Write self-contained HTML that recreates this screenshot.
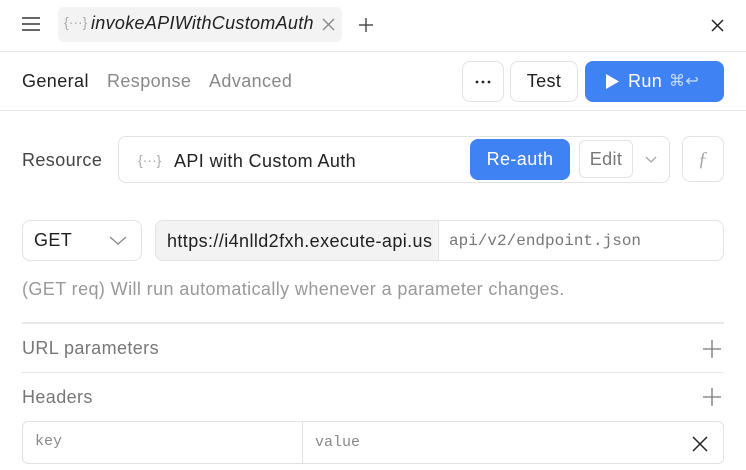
<!DOCTYPE html>
<html><head><style>
*{box-sizing:border-box;margin:0;padding:0}
body{width:746px;height:470px;overflow:hidden;background:#fff;font-family:"Liberation Sans",sans-serif;color:#1f1f1f;position:relative;letter-spacing:0.4px}
.a{position:absolute}
.btn{position:absolute;border:1px solid #e3e3e3;border-radius:8px;background:#fff;display:flex;align-items:center;justify-content:center}
.hr{position:absolute;left:0;right:0;height:1px;background:#e6e6e6}
.mono{font-family:"Liberation Mono",monospace;letter-spacing:0}
</style></head><body>
<svg class="a" style="left:21px;top:16px" width="20" height="16"><g stroke="#333" stroke-width="1.6"><line x1="1" y1="2" x2="19" y2="2"/><line x1="1" y1="8" x2="19" y2="8"/><line x1="1" y1="14" x2="19" y2="14"/></g></svg>
<div class="a" style="left:58px;top:7px;width:284px;height:35px;background:#f3f3f3;border-radius:6px"></div>
<div class="a" style="left:64px;top:14px;font-size:14px;color:#aaa;letter-spacing:0">{···}</div>
<div class="a" style="left:91px;top:13px;font-size:18px;font-style:italic;color:#222;letter-spacing:0.3px">invokeAPIWithCustomAuth</div>
<svg class="a" style="left:322px;top:18px" width="13" height="13"><g stroke="#888" stroke-width="1.3"><line x1="1" y1="1" x2="12" y2="12"/><line x1="12" y1="1" x2="1" y2="12"/></g></svg>
<svg class="a" style="left:358px;top:17px" width="16" height="16"><g stroke="#444" stroke-width="1.4"><line x1="8" y1="1" x2="8" y2="15"/><line x1="1" y1="8" x2="15" y2="8"/></g></svg>
<svg class="a" style="left:711px;top:19px" width="13" height="13"><g stroke="#222" stroke-width="1.5"><line x1="1" y1="1" x2="12" y2="12"/><line x1="12" y1="1" x2="1" y2="12"/></g></svg>
<div class="hr" style="top:51px"></div>
<div class="a" style="left:22px;top:71px;font-size:18px;color:#222">General</div>
<div class="a" style="left:107px;top:71px;font-size:18px;color:#888">Response</div>
<div class="a" style="left:209px;top:71px;font-size:18px;color:#888">Advanced</div>
<div class="btn" style="left:462px;top:61px;width:42px;height:41px"><svg width="16" height="4"><circle cx="2" cy="2" r="1.4" fill="#222"/><circle cx="8" cy="2" r="1.4" fill="#222"/><circle cx="14" cy="2" r="1.4" fill="#222"/></svg></div>
<div class="btn" style="left:510px;top:61px;width:68px;height:41px;font-size:18px">Test</div>
<div class="a" style="left:585px;top:61px;width:139px;height:41px;background:#3e82f4;border-radius:8px;color:#fff;font-size:18px">
<svg class="a" style="left:21px;top:13px" width="13" height="15"><path d="M0 0 L13 7.5 L0 15Z" fill="#fff"/></svg>
<span class="a" style="left:43px;top:10px">Run</span>
<span class="a" style="left:84px;top:10px;color:#c8dcfc;font-size:16px">⌘↩</span></div>
<div class="hr" style="top:110px"></div>
<div class="a" style="left:22px;top:150px;font-size:18px;color:#444">Resource</div>
<div class="btn" style="left:118px;top:136px;width:552px;height:47px"></div>
<div class="a" style="left:138px;top:152px;font-size:14px;color:#aaa;letter-spacing:0">{···}</div>
<div class="a" style="left:174px;top:151px;font-size:18px;color:#222">API with Custom Auth</div>
<div class="a" style="left:470px;top:139px;width:100px;height:41px;background:#3e82f4;border-radius:8px;color:#fff;font-size:18px;display:flex;align-items:center;justify-content:center">Re-auth</div>
<div class="btn" style="left:579px;top:140px;width:54px;height:38px;font-size:18px;color:#777;border-radius:6px">Edit</div>
<svg class="a" style="left:645px;top:156px" width="12" height="8"><path d="M1 1 L6 6 L11 1" stroke="#aaa" stroke-width="1.4" fill="none"/></svg>
<div class="btn" style="left:682px;top:136px;width:42px;height:46px;font-size:20px;color:#aaa;font-style:italic;font-family:'Liberation Serif',serif">ƒ</div>
<div class="btn" style="left:22px;top:220px;width:120px;height:41px;justify-content:flex-start;padding-left:11px;font-size:18px">GET</div>
<svg class="a" style="left:109px;top:236px" width="18" height="10"><path d="M1 1 L9 8 L17 1" stroke="#888" stroke-width="1.3" fill="none"/></svg>
<div class="btn" style="left:155px;top:220px;width:569px;height:41px;overflow:hidden;justify-content:flex-start">
<div style="width:283px;flex:none;height:100%;background:#f3f3f3;border-right:1px solid #e3e3e3;font-size:18px;padding:10px 0 0 11px;white-space:nowrap;overflow:hidden">https://i4nlld2fxh.execute-api.us</div>
<div class="mono" style="padding-left:10px;font-size:16px;color:#777">api/v2/endpoint.json</div></div>
<div class="a" style="left:22px;top:279px;font-size:18px;color:#999;white-space:nowrap">(GET req) Will run automatically whenever a parameter changes.</div>
<div class="a" style="left:22px;right:22px;top:322px;height:2px;background:#e8e8e8"></div>
<div class="a" style="left:22px;top:338px;font-size:18px;color:#777">URL parameters</div>
<svg class="a" style="left:703px;top:340px" width="18" height="18"><g stroke="#777" stroke-width="1.3"><line x1="9" y1="0" x2="9" y2="18"/><line x1="0" y1="9" x2="18" y2="9"/></g></svg>
<div class="a" style="left:22px;right:22px;top:372px;height:1px;background:#e8e8e8"></div>
<div class="a" style="left:22px;top:387px;font-size:18px;color:#777">Headers</div>
<svg class="a" style="left:703px;top:388px" width="18" height="18"><g stroke="#777" stroke-width="1.3"><line x1="9" y1="0" x2="9" y2="18"/><line x1="0" y1="9" x2="18" y2="9"/></g></svg>
<div class="btn" style="left:22px;top:421px;width:702px;height:43px;justify-content:flex-start;border-radius:6px">
<div class="mono" style="width:280px;flex:none;height:100%;border-right:1px solid #e3e3e3;padding:11px 0 0 12px;font-size:15px;color:#888">key</div>
<div class="mono" style="padding-left:12px;font-size:15px;color:#888">value</div></div>
<svg class="a" style="left:692px;top:436px" width="16" height="16"><g stroke="#222" stroke-width="1.5"><line x1="1" y1="1" x2="15" y2="15"/><line x1="15" y1="1" x2="1" y2="15"/></g></svg>
</body></html>
